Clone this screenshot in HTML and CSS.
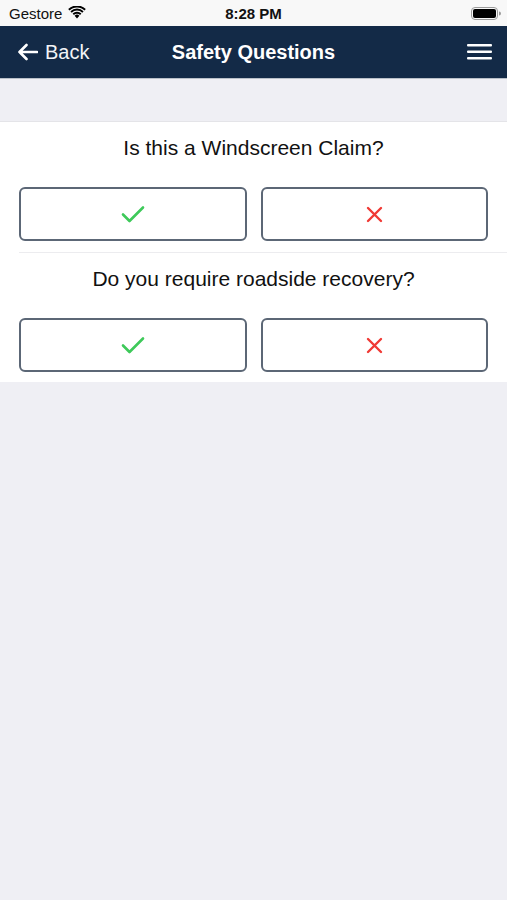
FILE: index.html
```html
<!DOCTYPE html>
<html>
<head>
<meta charset="utf-8">
<link rel="stylesheet" href="styles.css">
</head>
<body>
<div class="status">
  <div class="status-left">Gestore
    <svg class="wifi" width="18" height="13" viewBox="0 0 18 13">
      <path d="M9 12.5 L6.6 9.8 A3.4 3.4 0 0 1 11.4 9.8 Z" fill="#000"/>
      <path d="M4.6 7.6 A6.3 6.3 0 0 1 13.4 7.6 L12.1 9 A4.4 4.4 0 0 0 5.9 9 Z" fill="#000"/>
      <path d="M2.4 5.3 A9.4 9.4 0 0 1 15.6 5.3 L14.3 6.7 A7.5 7.5 0 0 0 3.7 6.7 Z" fill="#000"/>
      <path d="M0.2 3.1 A12.5 12.5 0 0 1 17.8 3.1 L16.5 4.5 A10.6 10.6 0 0 0 1.5 4.5 Z" fill="#000"/>
    </svg>
  </div>
  <div class="status-time">8:28 PM</div>
  <div class="status-right">
    <svg width="30" height="13" viewBox="0 0 30 13">
      <rect x="0.5" y="0.5" width="26" height="12" rx="3.5" fill="none" stroke="#9a9a9a" stroke-width="1"/>
      <rect x="2" y="2" width="23" height="9" rx="2" fill="#000"/>
      <path d="M28 4.5 A2 2 0 0 1 28 8.5 Z" fill="#9a9a9a"/>
    </svg>
  </div>
</div>
<div class="nav">
  <div class="nav-back">
    <svg width="21" height="18" viewBox="0 0 21 18">
      <path d="M20 9 H2.5 M9.5 2 L2.5 9 L9.5 16" fill="none" stroke="#fff" stroke-width="2.6" stroke-linecap="round" stroke-linejoin="round"/>
    </svg>
    <span>Back</span>
  </div>
  <div class="nav-title">Safety Questions</div>
  <div class="nav-menu">
    <svg width="25" height="18" viewBox="0 0 25 18">
      <rect x="0" y="1" width="25" height="2.4" rx="1" fill="#fff"/>
      <rect x="0" y="7.5" width="25" height="2.4" rx="1" fill="#fff"/>
      <rect x="0" y="14" width="25" height="2.4" rx="1" fill="#fff"/>
    </svg>
  </div>
</div>
<div class="spacer"></div>
<div class="panel">
  <div class="question">
    <div class="q-text">Is this a Windscreen Claim?</div>
    <div class="answers">
      <button class="answer"><svg width="24" height="18" viewBox="0 0 24 18"><path d="M2 9.5 L8.5 16 L22 2.5" fill="none" stroke="#3ec95a" stroke-width="2.6" stroke-linecap="round" stroke-linejoin="round"/></svg></button>
      <button class="answer"><svg width="17" height="17" viewBox="0 0 17 17"><path d="M2 2 L15 15 M15 2 L2 15" fill="none" stroke="#f03a35" stroke-width="2.4" stroke-linecap="round"/></svg></button>
    </div>
  </div>
  <div class="question sep">
    <div class="q-text">Do you require roadside recovery?</div>
    <div class="answers">
      <button class="answer"><svg width="24" height="18" viewBox="0 0 24 18"><path d="M2 9.5 L8.5 16 L22 2.5" fill="none" stroke="#3ec95a" stroke-width="2.6" stroke-linecap="round" stroke-linejoin="round"/></svg></button>
      <button class="answer"><svg width="17" height="17" viewBox="0 0 17 17"><path d="M2 2 L15 15 M15 2 L2 15" fill="none" stroke="#f03a35" stroke-width="2.4" stroke-linecap="round"/></svg></button>
    </div>
  </div>
</div>
</body>
</html>
```
FILE: styles.css
```css
html, body {
  margin: 0;
  padding: 0;
  background: #efeff4;
  font-family: "Liberation Sans", Arial, sans-serif;
  width: 507px;
  height: 900px;
  overflow: hidden;
}
.status {
  height: 26px;
  background: #f8f8f8;
  display: grid;
  grid-template-columns: 1fr auto 1fr;
  align-items: center;
  font-size: 15px;
  color: #111;
}
.status-left {
  padding-left: 9px;
  display: flex;
  align-items: center;
  gap: 6px;
}
.wifi { margin-top: -1px; }
.status-time {
  font-weight: bold;
  font-size: 15px;
}
.status-right {
  display: flex;
  justify-content: flex-end;
  padding-right: 6px;
}
.nav {
  height: 52px;
  background: #132a47;
  border-bottom: 1px solid #b9c0c9;
  display: grid;
  grid-template-columns: 1fr auto 1fr;
  align-items: center;
  color: #fff;
}
.nav-back {
  display: flex;
  align-items: center;
  gap: 7px;
  padding-left: 17px;
  font-size: 20px;
  color: #f2f4f7;
}
.nav-title {
  font-size: 20px;
  font-weight: bold;
}
.nav-menu {
  display: flex;
  justify-content: flex-end;
  padding-right: 15px;
}
.nav-menu svg { display: block; }
.spacer {
  height: 42px;
}
.panel {
  background: #fff;
  border-top: 1px solid #e4e4e8;
  padding: 0 19px 0;
}
.question {
  display: flex;
  flex-direction: column;
  align-items: stretch;
}
.question.sep {
  border-top: 1px solid #ececef;
  margin-right: -19px;
  padding-right: 19px;
}
.q-text {
  text-align: center;
  font-size: 21px;
  color: #111;
  height: 52px;
  line-height: 51px;
  margin-bottom: 13px;
}
.answers {
  display: grid;
  grid-template-columns: 1fr 1fr;
  gap: 14px;
  padding-bottom: 11px;
}
.question.sep .answers {
  padding-bottom: 10px;
}
.answer {
  height: 54px;
  background: #fff;
  border: 2px solid #5c6776;
  border-radius: 6px;
  display: flex;
  align-items: center;
  justify-content: center;
  padding: 0;
}
.answer svg { display: block; }
```
